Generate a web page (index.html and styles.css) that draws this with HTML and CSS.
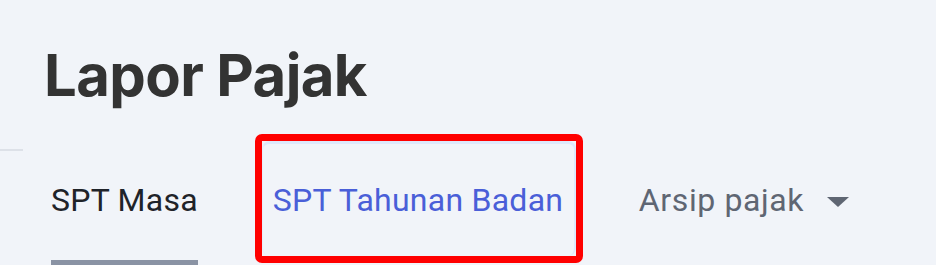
FILE: index.html
```html
<!DOCTYPE html>
<html lang="id">
<head>
<meta charset="utf-8">
<title>Lapor Pajak</title>
<link rel="stylesheet" href="styles.css">
</head>
<body>
<div class="page">
  <h1 class="title">Lapor Pajak</h1>
  <div class="tabs">
    <div class="divider-stub"></div>
    <div class="tab tab-current">
      <span class="tab-label">SPT Masa</span>
      <span class="tab-underline"></span>
    </div>
    <div class="highlight">
      <div class="tab tab-focus">
        <span class="tab-label">SPT Tahunan Badan</span>
      </div>
    </div>
    <div class="tab tab-menu">
      <span class="tab-label">Arsip pajak</span>
      <span class="caret"></span>
    </div>
  </div>
</div>
</body>
</html>
```

FILE: styles.css
```css
html, body {
  margin: 0;
  padding: 0;
  background: #f1f4f9;
  overflow: hidden;
}

.page {
  width: 936px;
  height: 265px;
  overflow: hidden;
  padding-top: 46px;
  box-sizing: border-box;
}

.title {
  margin: 0 0 0 44px;
  font-family: "Inter", "Liberation Sans", sans-serif;
  font-weight: 700;
  font-size: 58px;
  line-height: 58px;
  color: #333333;
  letter-spacing: -0.6px;
}

.tabs {
  margin-top: 30px;
  display: flex;
  align-items: flex-start;
  font-family: "Roboto", "Liberation Sans", sans-serif;
  font-size: 32px;
  line-height: 32px;
  letter-spacing: 0.25px;
}

.divider-stub {
  width: 23px;
  height: 2px;
  margin-top: 15px;
  background: #dde1e8;
}

.tab-label {
  display: block;
  white-space: nowrap;
}

.tab-current {
  margin-left: 28px;
  padding-top: 50px;
  display: flex;
  flex-direction: column;
  color: #1f2329;
}

.tab-underline {
  display: block;
  margin-top: 44px;
  height: 6px;
  background: #8a93a4;
}

.highlight {
  margin-left: 57px;
  border: 7px solid #ff0000;
  border-radius: 7px;
}

.tab-focus {
  width: 314px;
  height: 115px;
  box-sizing: border-box;
  padding: 40px 12px 0 10px;
  border-top: 3px solid #dde9fc;
  border-right: 2px solid #dde9fc;
  border-left: 1px solid #e6eefb;
  border-radius: 8px;
  color: #4a5fd8;
}

.tab-menu {
  margin-left: 56px;
  padding-top: 50px;
  display: flex;
  align-items: center;
  color: #5f6673;
}

.tab-menu .tab-label {
  letter-spacing: 0.6px;
}

.caret {
  display: block;
  width: 0;
  height: 0;
  margin-left: 23px;
  margin-top: 4px;
  border-left: 11.5px solid transparent;
  border-right: 11.5px solid transparent;
  border-top: 10px solid #5f6673;
}
```
